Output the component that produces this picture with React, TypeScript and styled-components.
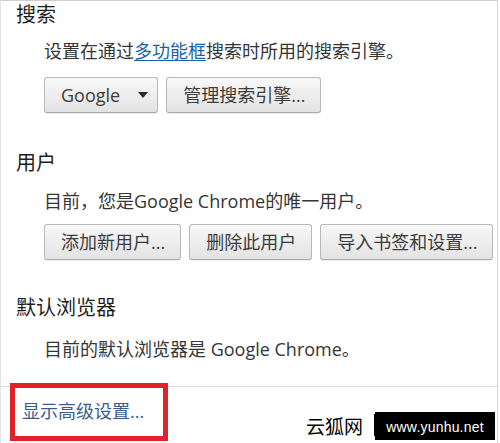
import React from "react";
import styled, { createGlobalStyle } from "styled-components";

const Global = createGlobalStyle`
  html, body { margin: 0; padding: 0; background: #ffffff; }
  body { font-family: "Open Sans", "Noto Sans CJK SC", sans-serif; }
  * { box-sizing: border-box; }
`;

const Page = styled.div`
  position: relative;
  width: 500px;
  height: 443px;
  overflow: hidden;
  background: #ffffff;
`;

const Panel = styled.div`
  width: 498px;
  height: 443px;
  border-top: 1px solid #cfcfcf;
  border-left: 1px solid #e4e4e4;
  border-right: 1px solid #d4d4d4;
  display: flex;
  flex-direction: column;
`;

const Section = styled.section<{ $top: number }>`
  display: flex;
  flex-direction: column;
  align-items: flex-start;
  margin-top: ${(p) => p.$top}px;
  padding-left: 15px;
`;

const Heading = styled.h3`
  margin: 0;
  font-size: 20px;
  line-height: 28px;
  font-weight: 400;
  color: #1e1e1e;
`;

const Body = styled.div<{ $descTop: number; $btnTop?: number }>`
  display: flex;
  flex-direction: column;
  align-items: flex-start;
  padding-left: 28px;
  margin-top: ${(p) => p.$descTop}px;
  gap: ${(p) => p.$btnTop ?? 0}px;
`;

const Desc = styled.p`
  margin: 0;
  font-size: 18px;
  line-height: 26px;
  color: #353535;
  white-space: nowrap;
`;

const InlineLink = styled.a`
  color: #1d5fa6;
  text-decoration: underline;
  text-underline-offset: 2px;
`;

const ButtonRow = styled.div`
  display: flex;
  gap: 8px;
`;

const Button = styled.button`
  display: inline-flex;
  align-items: center;
  height: 36px;
  padding: 0 15px 0 16px;
  font-family: "Open Sans", "Noto Sans CJK SC", sans-serif;
  font-size: 18px;
  line-height: 24px;
  color: #3c3c3c;
  border: 1px solid #b9b9b9;
  border-bottom-color: #a9a9a9;
  border-radius: 3px;
  background: linear-gradient(#f8f8f8, #e3e3e3);
  box-shadow: 0 1px 1px rgba(0, 0, 0, 0.08);
  white-space: nowrap;
  cursor: pointer;
`;

const SelectButton = styled(Button)`
  padding-right: 9px;
`;

const Caret = styled.span`
  display: inline-block;
  margin-left: 18px;
  width: 0;
  height: 0;
  border-left: 5px solid transparent;
  border-right: 5px solid transparent;
  border-top: 6px solid #2a2a2a;
`;

const Footer = styled.div`
  margin-top: auto;
  height: 57px;
  border-top: 1px solid #dcdcdc;
  padding: 12px 0 0 21px;
`;

const AdvancedLink = styled.a`
  font-size: 18px;
  line-height: 24px;
  color: #3b5c8b;
  text-decoration: none;
`;

const Highlight = styled.div`
  position: absolute;
  left: 10px;
  top: 383px;
  width: 158px;
  height: 58px;
  border: 5px solid #e0232b;
  pointer-events: none;
`;

const Watermark = styled.div`
  position: absolute;
  right: 5px;
  bottom: 3px;
  display: flex;
  align-items: flex-end;
  gap: 12px;
`;

const MarkName = styled.span`
  font-family: "Noto Sans CJK SC", sans-serif;
  font-size: 19px;
  line-height: 24px;
  color: #000000;
  letter-spacing: 0px;
  margin-bottom: 2px;
`;

const MarkUrl = styled.span`
  display: inline-flex;
  align-items: center;
  justify-content: center;
  width: 120px;
  height: 28px;
  background: #000000;
  border-top: 1px solid #000000;
  box-shadow: -4px -1px 0 -3px #000000;
  color: #ffffff;
  font-family: "Liberation Sans", sans-serif;
  font-size: 14px;
  letter-spacing: 0.2px;
`;

export default function App() {
  return (
    <Page>
      <Global />
      <Panel>
        <Section $top={0}>
          <Heading>搜索</Heading>
          <Body $descTop={9} $btnTop={13}>
            <Desc>
              设置在通过<InlineLink>多功能框</InlineLink>搜索时所用的搜索引擎。
            </Desc>
            <ButtonRow>
              <SelectButton>
                Google
                <Caret />
              </SelectButton>
              <Button>管理搜索引擎...</Button>
            </ButtonRow>
          </Body>
        </Section>
        <Section $top={36}>
          <Heading>用户</Heading>
          <Body $descTop={11} $btnTop={10}>
            <Desc>目前，您是Google Chrome的唯一用户。</Desc>
            <ButtonRow>
              <Button>添加新用户...</Button>
              <Button>删除此用户</Button>
              <Button>导入书签和设置...</Button>
            </ButtonRow>
          </Body>
        </Section>
        <Section $top={34}>
          <Heading>默认浏览器</Heading>
          <Body $descTop={14}>
            <Desc>目前的默认浏览器是 Google Chrome。</Desc>
          </Body>
        </Section>
        <Footer>
          <AdvancedLink>显示高级设置...</AdvancedLink>
        </Footer>
      </Panel>
      <Highlight />
      <Watermark>
        <MarkName>云狐网</MarkName>
        <MarkUrl>www.yunhu.net</MarkUrl>
      </Watermark>
    </Page>
  );
}
